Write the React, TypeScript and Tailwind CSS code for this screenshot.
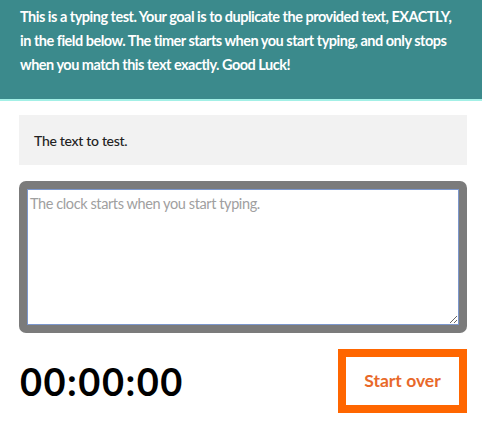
import { useState } from 'react';

export default function App() {
  const [value, setValue] = useState('');

  return (
    <div className="w-[482px] h-[429px] bg-white font-['Lato',sans-serif] overflow-hidden">
      {/* Instructions banner */}
      <div className="bg-[#3b8a8c] border-b-2 border-[#a3f0e6] h-[101px] pl-[20px] pr-[24px] pt-[5px]">
        <p className="text-white text-[14.5px] leading-[24px] font-bold tracking-[-0.5px]">
          This is a typing test. Your goal is to duplicate the provided text, EXACTLY, in the field below. The timer starts when you start typing, and only stops when you match this text exactly. Good Luck!
        </p>
      </div>

      <div className="px-[19px] pr-[15px]">
        {/* Text to match */}
        <div className="mt-[14px] h-[50px] bg-[#f2f2f2] flex items-center px-[15px]">
          <span className="text-[14px] tracking-[-0.3px] text-[#222] font-medium">The text to test.</span>
        </div>

        {/* Input field */}
        <div className="mt-[16px] rounded-[7px] bg-[#7b7b7b] p-[8px]">
          <textarea
            value={value}
            onChange={e => setValue(e.target.value)}
            placeholder="The clock starts when you start typing."
            className="block w-full h-[136px] bg-white border border-[#7c97cc] px-[2px] py-[4px] text-[14.5px] tracking-[-0.4px] leading-[20px] text-[#222] placeholder:text-[#a0a0a0] outline-none resize-y"
          />
        </div>

        {/* Timer + reset */}
        <div className="mt-[16px] flex items-center justify-between">
          <div className="text-[38px] font-bold text-black leading-none pl-[1px] tracking-[1.5px]">00:00:00</div>
          <button
            onClick={() => setValue('')}
            className="w-[129px] h-[64px] border-[8px] border-[#ff6600] bg-white text-[#e8692a] text-[17.5px] font-bold"
          >
            Start over
          </button>
        </div>
      </div>
    </div>
  );
}
